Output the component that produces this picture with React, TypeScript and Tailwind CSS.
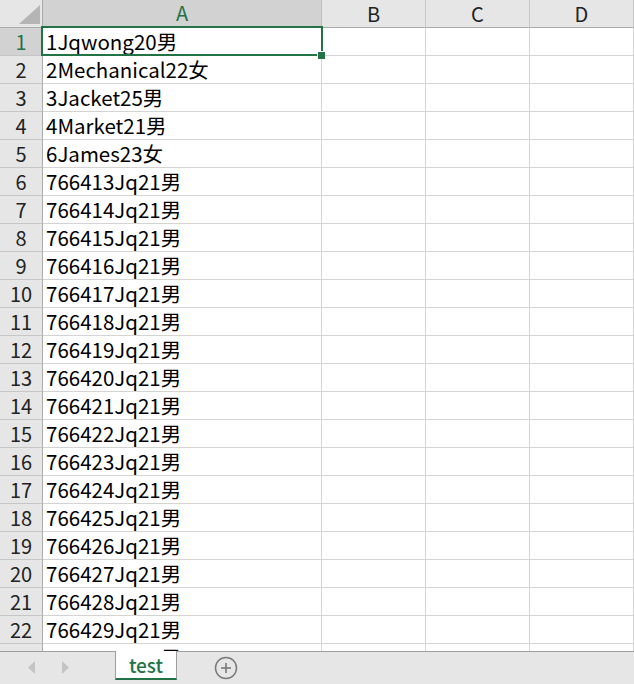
import React from "react";

const data: string[] = [
  "1Jqwong20男",
  "2Mechanical22女",
  "3Jacket25男",
  "4Market21男",
  "6James23女",
];
for (let i = 0; i < 18; i++) data.push(`7664${13 + i}Jq21男`);

const font = { fontFamily: '"Noto Sans CJK SC", "Liberation Sans", sans-serif' };

export default function App() {
  return (
    <div className="w-[634px] h-[684px] flex flex-col bg-white overflow-hidden" style={font}>
      <div className="h-[651px] overflow-hidden relative">
        {/* header row */}
        <div className="flex h-[28px]">
          <div className="w-[43px] h-[28px] bg-[#e6e6e6] border-r border-b border-[#ababab] relative">
            <svg className="absolute left-[19px] top-[5px]" width="21" height="19" viewBox="0 0 21 19">
              <polygon points="21,0 21,19 0,19" fill="#b5b5b5" />
            </svg>
          </div>
          <div className="w-[279px] h-[28px] bg-[#d2d2d2] border-r border-[#bdbdbd] border-b-2 border-b-[#217346] flex items-center justify-center text-[20px] leading-none text-[#217346]">A</div>
          {["B", "C", "D"].map((c) => (
            <div key={c} className="w-[104px] h-[28px] bg-[#e6e6e6] border-r border-[#c6c6c6] border-b border-b-[#ababab] flex items-center justify-center text-[20px] leading-none text-[#222]">{c}</div>
          ))}
        </div>
        {data.map((t, i) => (
          <div key={i} className="flex h-[28px]">
            <div className={`w-[43px] h-[28px] border-r border-b flex items-center justify-center text-[20px] leading-none ${i === 0 ? "bg-[#d2d2d2] text-[#217346] border-r-[#217346] border-b-[#c6c6c6]" : "bg-[#e6e6e6] text-[#222] border-r-[#ababab] border-b-[#c6c6c6]"}`}>{i + 1}</div>
            <div className="w-[279px] h-[28px] border-r border-b border-[#d4d4d4] flex items-center pl-[3px] text-[20.5px] leading-none text-black whitespace-nowrap">{t}</div>
            <div className="w-[104px] h-[28px] border-r border-b border-[#d4d4d4]" />
            <div className="w-[104px] h-[28px] border-r border-b border-[#d4d4d4]" />
            <div className="w-[104px] h-[28px] border-r border-b border-[#d4d4d4]" />
          </div>
        ))}
        {/* selection */}
        <div className="absolute left-[41px] top-[26px] w-[282px] h-[30px] border-2 border-[#217346]" />
        <div className="absolute left-[317px] top-[51px] w-[8px] h-[8px] bg-[#217346] border-l border-t border-white" />
      </div>
      <div className="h-[33px] border-t border-[#9e9e9e] bg-[#e6e6e6] relative flex items-start">
        <svg className="absolute left-[28px] top-[9px]" width="8" height="13" viewBox="0 0 8 13">
          <polygon points="7,0 7,13 0,6.5" fill="#c4c4c4" />
        </svg>
        <svg className="absolute left-[61px] top-[9px]" width="8" height="13" viewBox="0 0 8 13">
          <polygon points="1,0 1,13 8,6.5" fill="#c4c4c4" />
        </svg>
        <div className="ml-[115px] w-[62px] h-[29px] bg-white border-l border-r border-[#9e9e9e] border-b-2 border-b-[#217346] -mt-px flex items-center justify-center text-[19px] leading-none text-[#217346] font-medium">test</div>
        <svg className="absolute left-[214px] top-[4px]" width="24" height="24" viewBox="0 0 24 24">
          <circle cx="12" cy="12" r="10.5" fill="none" stroke="#7a7a7a" strokeWidth="1.5" />
          <line x1="7" y1="12" x2="17" y2="12" stroke="#7a7a7a" strokeWidth="1.6" />
          <line x1="12" y1="7" x2="12" y2="17" stroke="#7a7a7a" strokeWidth="1.6" />
        </svg>
      </div>
    </div>
  );
}
